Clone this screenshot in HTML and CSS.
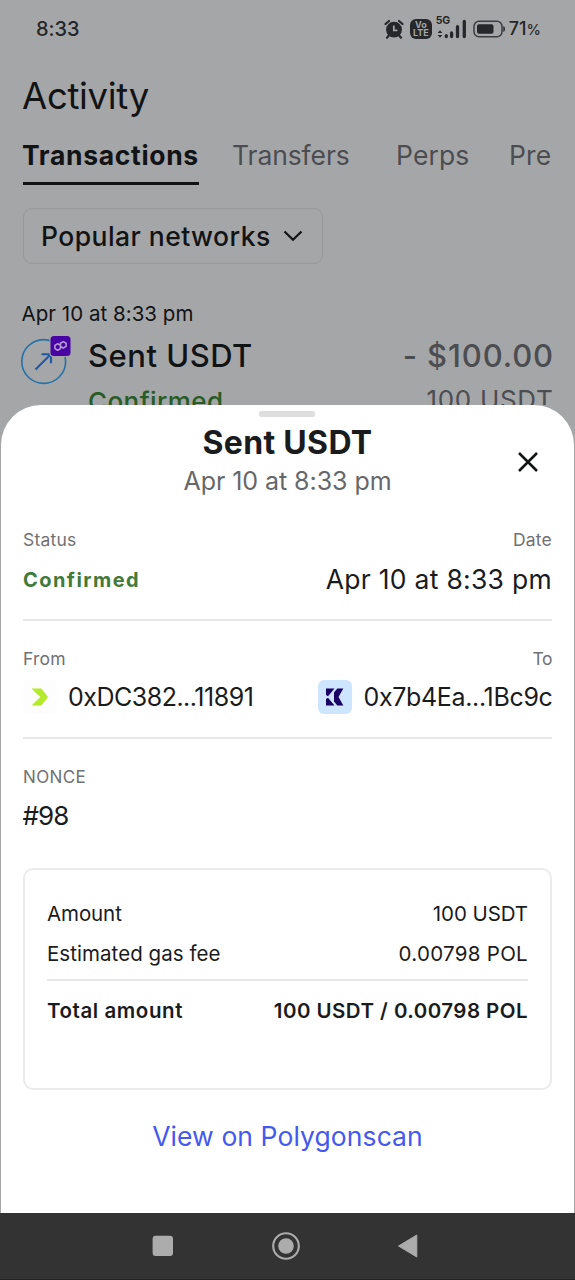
FILE: index.html
```
<!DOCTYPE html>
<html lang="en">
<head>
<meta charset="utf-8">
<title>Activity</title>
<link rel="stylesheet" href="styles.css">
</head>
<body>
<div class="screen">
  <main class="activity">
    <div class="statusbar">
      <span class="clock">8:33</span>
      <div class="indicators">
        <svg class="alarm" width="20" height="20" viewBox="0 0 20 20">
          <path d="M1.5 5 5 2M18.5 5 15 2M4.8 16.5 3 18.7M15.2 16.5 17 18.7" stroke="#26272a" stroke-width="2.2" stroke-linecap="round"/>
          <circle cx="10" cy="10.7" r="7.900" fill="#26272a"/>
          <path d="M9.800 6.600v4.700h3.600" fill="none" stroke="#a5a6a8" stroke-width="1.700"/>
        </svg>
        <span class="volte"><span>Vo</span><span>LTE</span></span>
        <span class="signal">
          <span class="gen">5G</span>
          <svg width="30" height="20" viewBox="0 0 30 20">
            <path d="M3 11.300 5.300 14H.7zM3 18.800.7 16h4.600z" fill="#26272a"/>
            <path d="M9.300 17.500v-.8M14.600 17.500v-3.600M20.500 17.500V7.700M27.300 17.500V2.500" stroke="#26272a" stroke-width="3.300" stroke-linecap="round"/>
          </svg>
        </span>
        <svg class="battery" width="33" height="18" viewBox="0 0 33 18">
          <rect x="1" y="1.200" width="28" height="15.600" rx="5" fill="none" stroke="#3c3d40" stroke-width="1.500"/>
          <rect x="4" y="4.200" width="16.500" height="9.600" rx="2" fill="#26272a"/>
          <path d="M30.300 6c2.200.6 2.200 5.400 0 6z" fill="#26272a"/>
        </svg>
        <span class="level">71<small>%</small></span>
      </div>
    </div>
    <h1 class="heading">Activity</h1>
    <nav class="tabs">
      <span class="tab tab-active">Transactions</span>
      <span class="tab tab-transfers">Transfers</span>
      <span class="tab tab-perps">Perps</span>
      <span class="tab tab-pre">Pre</span>
    </nav>
    <div class="network">
      <span>Popular networks</span>
      <svg width="20" height="12" viewBox="0 0 20 12"><path d="M1.500 1.500 10 9.700l8.500-8.200" fill="none" stroke="#121314" stroke-width="2.200"/></svg>
    </div>
    <div class="tx-date">Apr 10 at 8:33 pm</div>
    <div class="tx">
      <svg class="tx-icon" width="50" height="50" viewBox="0 0 50 50">
        <circle cx="22.700" cy="26.500" r="21.900" fill="none" stroke="#2471a8" stroke-width="1.600"/>
        <path d="M14.500 34.500 29.500 19.500M20.500 19.200h9.500v9" fill="none" stroke="#1f59a5" stroke-width="2.100"/>
        <rect x="28.500" y="0" width="22" height="22" rx="4" fill="#a5a6a8"/>
        <rect x="29.500" y="1" width="20" height="20" rx="3.500" fill="#4902a3"/>
        <path d="m36.700 8.800 2.800 1.600v3.200l-2.800 1.600-2.800-1.600v-3.200zM42.300 6.600l2.800 1.600v3.200L42.300 13l-2.800-1.600V8.200z" fill="none" stroke="#b39bd2" stroke-width="1.600" stroke-linejoin="round"/>
      </svg>
      <div class="tx-name"><div class="tx-title">Sent USDT</div><div class="tx-status">Confirmed</div></div>
      <div class="tx-value"><div class="tx-fiat">- $100.00</div><div class="tx-token">100 USDT</div></div>
    </div>
  </main>

  <section class="sheet">
    <div class="grip"></div>
    <header class="sheet-head">
      <div class="sheet-title">Sent USDT</div>
      <div class="sheet-sub">Apr 10 at 8:33 pm</div>
      <svg class="close" width="22" height="22" viewBox="0 0 22 22"><path d="m2 2 18 18M20 2 2 20" stroke="#121314" stroke-width="2.500"/></svg>
    </header>
    <div class="pair pair-status">
      <div><div class="label">Status</div><div class="confirmed">Confirmed</div></div>
      <div class="end"><div class="label">Date</div><div class="date">Apr 10 at 8:33 pm</div></div>
    </div>
    <div class="pair pair-address">
      <div><div class="label">From</div>
        <div class="address"><span class="avatar avatar-from"><svg width="18" height="18" viewBox="0 0 18 18"><path d="M.5.500h9.800L17 9l-6.700 8.500H.5L6 12 9.500 9 6 6z" fill="#b3ea2c"/></svg></span><span class="hash">0xDC382...11891</span></div></div>
      <div class="end"><div class="label label-to">To</div>
        <div class="address"><span class="avatar avatar-to"><svg width="18" height="18" viewBox="0 0 18 18"><path d="M0 .5h8.500L2 8.300 0 7zM0 17.500h8.500L2 9.700 0 11zM17.300.5 12.500 9l4.800 8.500h-6L8 13.500v-9L11.300.5z" fill="#190066"/></svg></span><span class="hash hash-to">0x7b4Ea...1Bc9c</span></div></div>
    </div>
    <div class="nonce"><div class="label label-nonce">NONCE</div><div class="nonce-value">#98</div></div>
    <div class="summary">
      <div class="line"><span class="k-amount">Amount</span><span class="v-amount">100 USDT</span></div>
      <div class="line"><span class="k-gas">Estimated gas fee</span><span class="v-gas">0.00798 POL</span></div>
      <div class="line total"><span class="k-total">Total amount</span><span class="v-total">100 USDT / 0.00798 POL</span></div>
    </div>
    <a class="explorer">View on Polygonscan</a>
  </section>

  <footer class="navbar">
    <svg width="22" height="28" viewBox="0 0 22 28"><rect x=".6" y="3.700" width="20.400" height="20.400" rx="3" fill="#acacac"/></svg>
    <svg width="28" height="28" viewBox="0 0 28 28"><circle cx="14" cy="14" r="12.800" fill="none" stroke="#acacac" stroke-width="2.100"/><circle cx="14" cy="14" r="7.800" fill="#acacac"/></svg>
    <svg width="22" height="28" viewBox="0 0 22 28"><path d="M19.800 3v22L1.500 14z" fill="#acacac" stroke="#acacac" stroke-linejoin="round"/></svg>
  </footer>
</div>
</body>
</html>
```
FILE: styles.css
```
* { box-sizing: border-box; }
body { margin: 0; font-family: Inter, sans-serif; color: #1a1b1d; background: #a5a6a8; }
svg { display: block; flex: none; }
.screen { width: 575px; height: 1280px; display: flex; flex-direction: column; overflow: hidden; background: #a5a6a8; }

.activity { height: 405px; padding: 0 22px; overflow: hidden; flex: none; color: #121314; white-space: nowrap; }
.statusbar { height: 57px; display: flex; align-items: center; justify-content: space-between; padding: 0 12px 0 14px; color: #26272a; }
.clock { font-size: 20px; font-weight: 500; letter-spacing: -0.1px; }
.indicators { display: flex; align-items: center; }
.volte { width: 22px; height: 20px; margin-left: 6px; padding-top: 2px; border-radius: 6px; background: #26272a; color: #a5a6a8; font-size: 9px; line-height: 8px; font-weight: 700; text-align: center; display: flex; flex-direction: column; }
.volte span { height: 8px; }
.signal { position: relative; height: 20px; margin-left: 5px; }
.gen { position: absolute; left: -1px; top: -4px; font-size: 10.5px; line-height: 12px; font-weight: 700; letter-spacing: -0.4px; }
.battery { margin-left: 6px; }
.level { margin-left: 3px; font-size: 18px; font-weight: 500; line-height: 24px; padding-top: 2px; }
.level small { font-size: 14.5px; }

.heading { margin: 19px 0 0 0; height: 40px; line-height: 41px; font-size: 36.5px; font-weight: 400; letter-spacing: -0.3px; }
.tabs { display: flex; margin: 23px 0 0 1px; height: 46px; font-size: 26.5px; line-height: 33px; color: #4c4d51; }
.tab-active { width: 176px; text-indent: -1px; font-weight: 700; letter-spacing: 0.67px; color: #121314; border-bottom: 3px solid #121314; }
.tab-transfers { width: 162px; margin-left: 33px; letter-spacing: -0.1px; }
.tab-perps { width: 113px; margin-left: 2px; letter-spacing: 0.1px; }
.tab-pre { letter-spacing: 0.2px; }
.network { margin: 23px 0 0 1px; width: 300px; height: 56px; padding: 0 19px 0 17px; border: 1.5px solid #97989a; border-radius: 9px; display: flex; align-items: center; justify-content: space-between; font-size: 26.5px; font-weight: 500; letter-spacing: 0.45px; }
.tx-date { margin-top: 36px; height: 28px; line-height: 28px; font-size: 20.5px; letter-spacing: 0.03px; margin-left: -0.5px; }
.tx { display: flex; padding-top: 7px; }
.tx-icon { margin-left: -1px; }
.tx-name { margin-left: 17px; }
.tx-title, .tx-fiat { font-size: 31px; line-height: 41px; font-weight: 500; letter-spacing: 0.5px; }
.tx-status { font-size: 26px; line-height: 52px; font-weight: 500; letter-spacing: 0.42px; color: #285c27; }
.tx-value { margin-left: auto; text-align: right; color: #4c4d51; }
.tx-fiat { letter-spacing: 0.9px; margin-right: -1px; }
.tx-token { font-size: 26px; line-height: 48px; letter-spacing: 0.7px; margin-right: -0.5px; }

.sheet { flex: 1; margin: 0 1px; padding: 0 22px; background: #fff; border-radius: 40px 40px 0 0; display: flex; flex-direction: column; }
.grip { align-self: center; width: 56px; height: 6px; margin: 6px 1px 0 0; border-radius: 2px; background: #dedede; }
.sheet-head { position: relative; text-align: center; height: 91px; padding-top: 6px; }
.sheet-title { font-size: 32px; line-height: 40px; font-weight: 700; letter-spacing: 0.33px; }
.sheet-sub { font-size: 25px; line-height: 36px; color: #66676a; letter-spacing: -0.06px; }
.close { position: absolute; right: 13px; top: 34px; }
.pair { display: flex; justify-content: space-between; border-bottom: 2px solid #e8e8e9; }
.end { text-align: right; }
.label { font-size: 17.5px; line-height: 24px; letter-spacing: 0.2px; color: #707174; }
.pair-status { height: 113px; padding-top: 19.5px; }
.confirmed { margin-top: 13px; font-size: 20px; line-height: 31px; font-weight: 700; letter-spacing: 1.45px; color: #417b3b; }
.date { margin-top: 10px; font-size: 26.5px; line-height: 34px; letter-spacing: 0.28px; }
.pair-address { height: 118px; padding-top: 26px; }
.label-to { letter-spacing: -0.5px; }
.address { display: flex; align-items: center; height: 34px; margin-top: 9px; }
.avatar { width: 34px; height: 34px; border-radius: 6px; display: flex; align-items: center; justify-content: center; }
.avatar-from { background: #fdfdfd; }
.avatar-to { background: #cde5ff; }
.hash { margin-left: 11px; font-size: 25px; line-height: 34px; letter-spacing: -0.5px; }
.hash-to { margin-right: -0.5px; letter-spacing: -0.34px; }
.nonce { height: 129px; padding-top: 25.5px; }
.label-nonce { font-size: 17px; letter-spacing: 0.35px; }
.nonce-value { margin-top: 9px; margin-left: -0.5px; font-size: 26px; line-height: 36px; letter-spacing: -0.9px; }
.summary { height: 222px; border: 2px solid #ebebec; border-radius: 10px; padding: 24px 22px 0; font-size: 20.5px; }
.line { display: flex; justify-content: space-between; height: 40px; line-height: 40px; white-space: nowrap; }
.k-amount { letter-spacing: -0.1px; }
.k-gas { letter-spacing: 0.05px; }
.v-amount { letter-spacing: -0.08px; }
.v-gas { letter-spacing: 0.3px; }
.total { height: 62px; margin-top: 5px; border-top: 2px solid #e8e8e9; line-height: 60px; font-weight: 600; }
.k-total { letter-spacing: 0.57px; }
.v-total { letter-spacing: 0.45px; }
.explorer { align-self: center; margin-top: 26px; font-size: 26.5px; line-height: 40px; letter-spacing: 0.08px; color: #4459ed; }

.navbar { height: 67px; flex: none; background: #333; border-bottom: 1px solid #262122; display: flex; align-items: center; justify-content: space-between; padding: 0 156px 0 152px; }
```
